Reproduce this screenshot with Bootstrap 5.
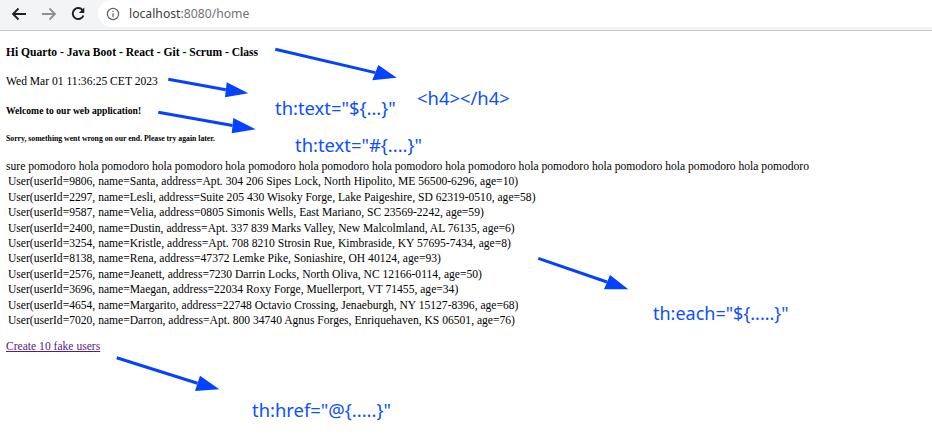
<!DOCTYPE html>
<html lang="en">
<head>
  <meta charset="UTF-8" />
  <meta name="viewport" content="width=device-width, initial-scale=1.0"/>
  <title>localhost:8080/home</title>
  <link href="https://cdn.jsdelivr.net/npm/bootstrap@5.3.2/dist/css/bootstrap.min.css" rel="stylesheet">
  <style>
    html, body { height: 446px; overflow: hidden; }
    body {
      position: relative;
      background: #fff;
      color: #000;
      font-family: "Liberation Serif", serif;
      font-size: 11.58px;
      line-height: 14px;
    }

    /* Browser bar */
    .chrome-bar {
      height: 31px;
      background: #f3f4f5;
      border-bottom: 1px solid #c9cacb;
      padding-bottom: 3px;
    }
    .chrome-btn { width: 22px; height: 22px; margin-left: 8px; }
    .addr-pill {
      margin-left: 8px;
      flex: 1;
      height: 27px;
      background: #fff;
      border-radius: 14px 0 0 14px;
      padding-left: 8px;
      font-family: "Noto Sans", sans-serif;
      font-size: 12.2px;
      color: #3c4043;
    }
    .addr-pill svg { margin-right: 1px; }
    .addr-pill .addr-port { color: #70757a; }

    /* Page text */
    .page-body { padding: 0 6px; }
    .head-one { font-size: 11.58px; font-weight: 700; line-height: 14px; margin: 15px 0 0; }
    .date-line { margin: 15px 0 0; }
    .head-two { font-size: 9.65px; font-weight: 700; line-height: 12px; margin: 16px 0 0; }
    .head-three { font-size: 7.72px; font-weight: 700; line-height: 10px; margin: 16.500px 0 0; }
    .pomodoro { margin: 16.500px 0 0; white-space: nowrap; }
    .user-row { padding-left: 2px; white-space: nowrap; line-height: 14px; margin-top: 1.400px; }
    .fake-link { display: inline-block; margin-top: 12px; color: #551a8b; }

    /* Annotations drawn over the page */
    .note-layer { position: absolute; left: 0; top: 0; width: 932px; height: 446px; pointer-events: none; }
    .note-arrow { stroke: #0542ff; stroke-width: 3; }
    .note-head { fill: #0542ff; }
    .note {
      position: absolute;
      color: #0b4fff;
      font-family: "Noto Sans", sans-serif;
      font-size: 18.4px;
      line-height: 22px;
      white-space: nowrap;
    }
    .note-text-var { left: 275px; top: 97px; }
    .note-h4 { left: 417px; top: 87px; }
    .note-text-msg { left: 295px; top: 134px; }
    .note-each { left: 653px; top: 302px; font-size: 18px; }
    .note-href { left: 252px; top: 399px; }
  </style>
</head>
<body>

  <!-- Browser bar -->
  <div class="chrome-bar d-flex align-items-center">
    <svg class="chrome-btn" viewBox="0 0 22 22" fill="none" stroke="#202124" stroke-width="1.8"><path d="M18 11H5M10.500 5.500 5 11l5.500 5.500"/></svg>
    <svg class="chrome-btn" viewBox="0 0 22 22" fill="none" stroke="#8f9092" stroke-width="1.8"><path d="M4 11h13M11.500 5.500 17 11l-5.500 5.500"/></svg>
    <svg class="chrome-btn" viewBox="0 0 22 22" fill="none" stroke="#202124" stroke-width="2"><path d="M14.800 7.500A5.500 5.500 0 1 0 15.400 12.500"/><path d="M16.300 4.500v5.500h-5.500z" fill="#202124" stroke="none"/></svg>
    <div class="addr-pill d-flex align-items-center gap-2">
      <svg width="14" height="14" viewBox="0 0 14 14" fill="none" stroke="#5f6368" stroke-width="1.200"><circle cx="7" cy="7" r="5.600"/><path d="M7 6.200v4M7 3.800v1.300"/></svg>
      <span>localhost<span class="addr-port">:8080/home</span></span>
    </div>
  </div>

  <!-- Page -->
  <div class="page-body">
    <h4 class="head-one">Hi Quarto - Java Boot - React - Git - Scrum - Class</h4>
    <p class="date-line mb-0">Wed Mar 01 11:36:25 CET 2023</p>
    <h5 class="head-two mb-0">Welcome to our web application!</h5>
    <h6 class="head-three mb-0">Sorry, something went wrong on our end. Please try again later.</h6>
    <div class="pomodoro">sure pomodoro hola pomodoro hola pomodoro hola pomodoro hola pomodoro hola pomodoro hola pomodoro hola pomodoro hola pomodoro hola pomodoro hola pomodoro</div>
    <div id="user-list"></div>
    <a class="fake-link" href="#">Create 10 fake users</a>
  </div>

  <!-- Annotations -->
  <div class="note-layer">
    <svg width="932" height="446" viewBox="0 0 932 446">
      <line class="note-arrow" x1="275.300" y1="49.300" x2="375.300" y2="72.600"/>
      <polygon class="note-head" points="396.700,77.700 378.300,65 372.300,80.300"/>
      <line class="note-arrow" x1="168.300" y1="79.300" x2="225.800" y2="89.800"/>
      <polygon class="note-head" points="248.300,93.300 226.700,82.300 225,97.300"/>
      <line class="note-arrow" x1="158.300" y1="112.300" x2="232.500" y2="125.600"/>
      <polygon class="note-head" points="255.700,129.300 233.300,118 231.700,133.300"/>
      <line class="note-arrow" x1="538.300" y1="258.300" x2="607" y2="282"/>
      <polygon class="note-head" points="628.300,289.300 610,275 604,289.300"/>
      <line class="note-arrow" x1="116.700" y1="357.700" x2="197.500" y2="383.300"/>
      <polygon class="note-head" points="219.300,389.300 200,375.700 195,391"/>
    </svg>
    <span class="note note-text-var">th:text="${...}"</span>
    <span class="note note-h4">&lt;h4&gt;&lt;/h4&gt;</span>
    <span class="note note-text-msg">th:text="#{....}"</span>
    <span class="note note-each">th:each="${.....}"</span>
    <span class="note note-href">th:href="@{.....}"</span>
  </div>

  <script src="https://cdn.jsdelivr.net/npm/bootstrap@5.3.2/dist/js/bootstrap.bundle.min.js"></script>
  <script>
    const users = [
      "User(userId=9806, name=Santa, address=Apt. 304 206 Sipes Lock, North Hipolito, ME 56500-6296, age=10)",
      "User(userId=2297, name=Lesli, address=Suite 205 430 Wisoky Forge, Lake Paigeshire, SD 62319-0510, age=58)",
      "User(userId=9587, name=Velia, address=0805 Simonis Wells, East Mariano, SC 23569-2242, age=59)",
      "User(userId=2400, name=Dustin, address=Apt. 337 839 Marks Valley, New Malcolmland, AL 76135, age=6)",
      "User(userId=3254, name=Kristle, address=Apt. 708 8210 Strosin Rue, Kimbraside, KY 57695-7434, age=8)",
      "User(userId=8138, name=Rena, address=47372 Lemke Pike, Soniashire, OH 40124, age=93)",
      "User(userId=2576, name=Jeanett, address=7230 Darrin Locks, North Oliva, NC 12166-0114, age=50)",
      "User(userId=3696, name=Maegan, address=22034 Roxy Forge, Muellerport, VT 71455, age=34)",
      "User(userId=4654, name=Margarito, address=22748 Octavio Crossing, Jenaeburgh, NY 15127-8396, age=68)",
      "User(userId=7020, name=Darron, address=Apt. 800 34740 Agnus Forges, Enriquehaven, KS 06501, age=76)"
    ];
    const userList = document.getElementById("user-list");
    users.forEach(text => {
      const row = document.createElement("div");
      row.className = "user-row";
      row.textContent = text;
      userList.appendChild(row);
    });
  </script>
</body>
</html>
